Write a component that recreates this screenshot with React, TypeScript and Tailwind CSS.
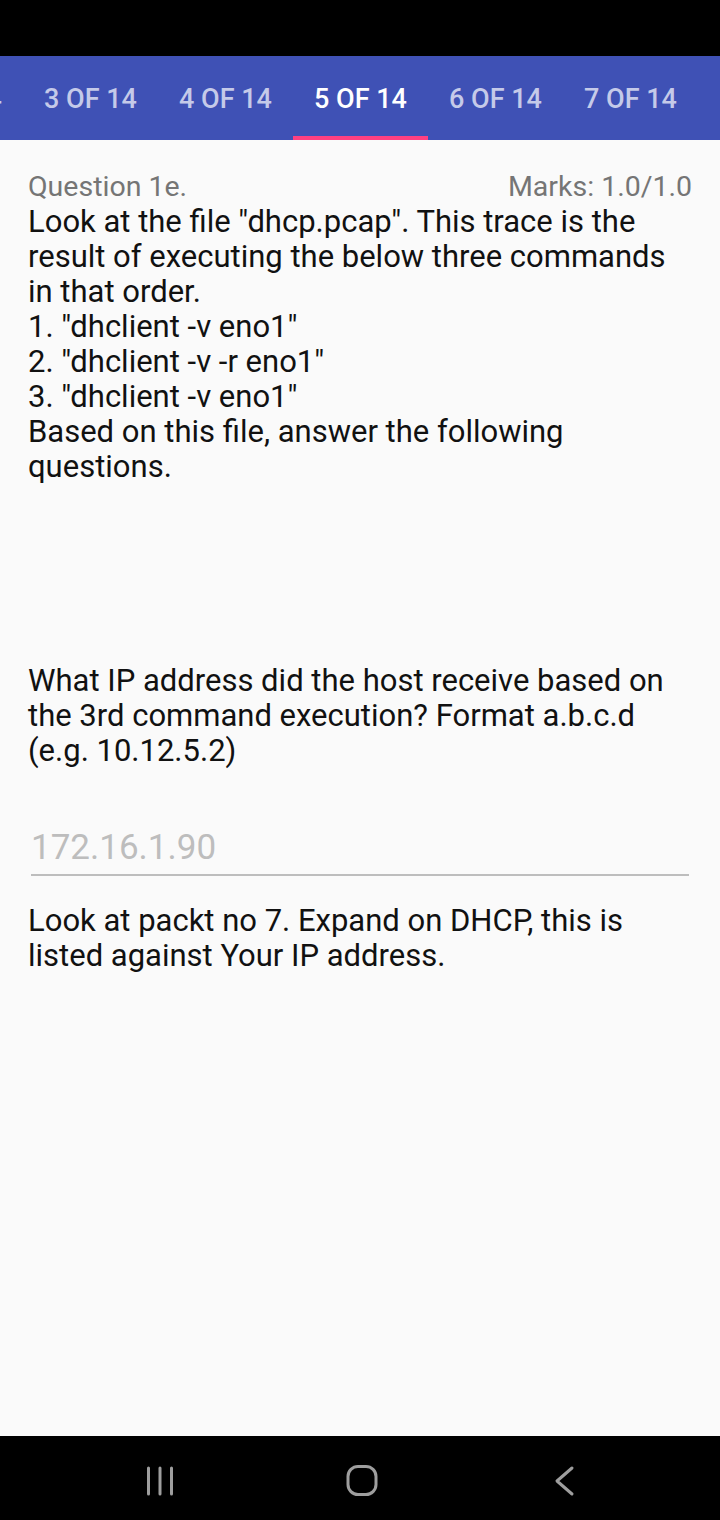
import React from "react";

const tabs = ["2 OF 14", "3 OF 14", "4 OF 14", "5 OF 14", "6 OF 14", "7 OF 14"];
const active = "5 OF 14";

function TabBar() {
  return (
    <div className="relative h-[84px] overflow-hidden bg-[#3f51b5]">
      <div className="absolute left-[-112px] top-0 flex h-full">
        {tabs.map((t) => (
          <div
            key={t}
            className={
              "relative flex h-full w-[135px] shrink-0 items-center justify-center pt-[2px] text-[27px] font-medium " +
              (t === active ? "text-white" : "text-[#c5cae9]")
            }
          >
            {t}
            {t === active ? (
              <span className="absolute bottom-0 left-0 h-[4px] w-full bg-[#ff4081]" />
            ) : null}
          </div>
        ))}
      </div>
    </div>
  );
}

function NavBar() {
  return (
    <div className="flex h-[84px] items-center gap-[162px] bg-black pl-[140px] pt-[6px]">
      <svg width="40" height="40" viewBox="0 0 40 40">
        <g stroke="#9e9e9e" strokeWidth="3" strokeLinecap="round">
          <line x1="8.5" y1="7" x2="8.5" y2="33" />
          <line x1="20" y1="7" x2="20" y2="33" />
          <line x1="31.5" y1="7" x2="31.5" y2="33" />
        </g>
      </svg>
      <svg width="40" height="40" viewBox="0 0 40 40">
        <rect x="6" y="5.5" width="28" height="28" rx="10" fill="none" stroke="#9e9e9e" strokeWidth="3" />
      </svg>
      <svg width="40" height="40" viewBox="0 0 40 40">
        <polyline points="28,7 13,20 28,33" fill="none" stroke="#9e9e9e" strokeWidth="3" strokeLinecap="round" strokeLinejoin="round" />
      </svg>
    </div>
  );
}

export default function App() {
  return (
    <div
      className="flex h-[1520px] w-[720px] flex-col bg-[#fafafa]"
      style={{ fontFamily: "Roboto, 'Noto Sans', sans-serif" }}
    >
      <div className="h-[56px] bg-black" />
      <TabBar />
      <div className="flex-1 px-[28px] pt-[30px] text-[#111111]">
        <div className="flex items-center justify-between text-[28.5px] leading-[34px] text-[#757575]">
          <span>Question 1e.</span>
          <span>Marks: 1.0/1.0</span>
        </div>
        <p className="text-[31px] leading-[35px]">
          Look at the file "dhcp.pcap". This trace is the result of executing the below three commands in that order.
          <br />
          1. "dhclient -v eno1"
          <br />
          2. "dhclient -v -r eno1"
          <br />
          3. "dhclient -v eno1"
          <br />
          Based on this file, answer the following questions.
        </p>
        <p className="mt-[179px] text-[31px] leading-[35px]">
          What IP address did the host receive based on the 3rd command execution? Format a.b.c.d (e.g. 10.12.5.2)
        </p>
        <div className="ml-[3px] mr-[3px] mt-[60px] border-b-2 border-[#bdbdbd] pb-[6px]">
          <div className="text-[35px] leading-[40px] text-[#bdbdbd]">172.16.1.90</div>
        </div>
        <p className="mt-[27px] text-[31px] leading-[35px]">
          Look at packt no 7. Expand on DHCP, this is listed against Your IP address.
        </p>
      </div>
      <NavBar />
    </div>
  );
}
